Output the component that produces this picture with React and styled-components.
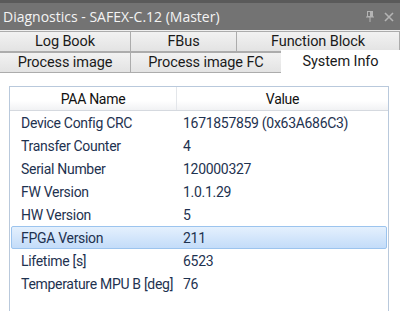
import React from "react";
import styled, { createGlobalStyle } from "styled-components";

const Global = createGlobalStyle`
  html, body { margin: 0; padding: 0; background: #ffffff; }
  body { font-family: "Open Sans", "Noto Sans", sans-serif; }
  #root { width: 400px; height: 311px; overflow: hidden; }
`;

const Window = styled.div`
  width: 400px;
  height: 311px;
  display: flex;
  flex-direction: column;
  background: #ffffff;
  border-top: 3px solid #5a5a5a;
  box-sizing: border-box;
  overflow: hidden;
`;

const TitleBar = styled.div`
  height: 27px;
  background: #737373;
  display: flex;
  align-items: center;
  padding: 0 6px 0 3px;
  color: #f4f4f4;
  font-size: 14px;
  flex-shrink: 0;
`;

const Title = styled.div`
  flex: 1;
  white-space: nowrap;
`;

const TitleIcons = styled.div`
  display: flex;
  gap: 10px;
  align-items: center;
  color: #b4b4b4;
`;

const TabStrip = styled.div`
  background: #f0f0f0;
  padding-top: 1px;
  display: flex;
  flex-direction: column;
  flex-shrink: 0;
`;

const TabRow = styled.div`
  display: grid;
  grid-template-columns: ${(p) => p.$cols};
  height: 21px;
  align-items: end;
`;

const Tab = styled.div`
  height: ${(p) => (p.$active ? "23px" : "21px")};
  margin-top: ${(p) => (p.$active ? "-2px" : "0")};
  box-sizing: border-box;
  display: flex;
  align-items: center;
  justify-content: center;
  font-family: "Roboto", "Open Sans", sans-serif;
  font-size: 14.5px;
  color: #1a1a1a;
  letter-spacing: -0.1px;
  background: ${(p) =>
    p.$active ? "#ffffff" : "linear-gradient(#f2f2f2, #e3e3e3)"};
  border: 1px solid ${(p) => (p.$active ? "#ffffff" : "#acacac")};
  border-left-width: ${(p) => (p.$first ? "0" : "1px")};
  margin-left: ${(p) => (p.$first ? "0" : "-1px")};
  border-bottom-color: ${(p) => (p.$active ? "#ffffff" : "#acacac")};
  position: relative;
  z-index: ${(p) => (p.$active ? 1 : 0)};
`;

const Content = styled.div`
  flex: 1;
  padding: 13px 11px 0 9px;
  display: flex;
  flex-direction: column;
  min-height: 0;
`;

const Grid = styled.div`
  flex: 1;
  border: 1px solid #b9c9dc;
  border-bottom: none;
  display: flex;
  flex-direction: column;
  font-family: "Roboto", "Open Sans", sans-serif;
  font-size: 14px;
  letter-spacing: -0.3px;
`;

const Header = styled.div`
  display: grid;
  grid-template-columns: 167px 1fr;
  height: 23px;
  background: linear-gradient(#ffffff 0%, #ffffff 60%, #f1f2f4 100%);
  border-bottom: 1px solid #d5d9df;
  color: #111;
`;

const HeaderCell = styled.div`
  display: flex;
  align-items: center;
  justify-content: center;
  border-right: ${(p) => (p.$last ? "none" : "1px solid #e3e6ea")};
`;

const Body = styled.div`
  display: flex;
  flex-direction: column;
  padding: 0 1px;
`;

const Row = styled.div`
  display: grid;
  grid-template-columns: 171px 1fr;
  height: 23px;
  align-items: center;
  box-sizing: border-box;
  color: #1e3250;
  border: 1px solid ${(p) => (p.$selected ? "#9cc4ee" : "transparent")};
  border-radius: 2px;
  background: ${(p) =>
    p.$selected ? "linear-gradient(#e4f0fd, #c3dcf9)" : "transparent"};
`;

const Cell = styled.div`
  padding-left: ${(p) => (p.$value ? "0" : "9px")};
  white-space: nowrap;
`;

const rows = [
  ["Device Config CRC", "1671857859 (0x63A686C3)"],
  ["Transfer Counter", "4"],
  ["Serial Number", "120000327"],
  ["FW Version", "1.0.1.29"],
  ["HW Version", "5"],
  ["FPGA Version", "211"],
  ["Lifetime [s]", "6523"],
  ["Temperature MPU B [deg]", "76"],
];

export default function App() {
  return (
    <>
      <Global />
      <Window>
        <TitleBar>
          <Title>Diagnostics - SAFEX-C.12 (Master)</Title>
          <TitleIcons>
            <svg width="8" height="11" viewBox="0 0 8 11">
              <rect x="1.5" y="0.5" width="5" height="5" fill="none" stroke="currentColor" />
              <rect x="4" y="1" width="2" height="4.5" fill="currentColor" />
              <line x1="0" y1="6" x2="8" y2="6" stroke="currentColor" />
              <line x1="4" y1="6" x2="4" y2="11" stroke="currentColor" />
            </svg>
            <svg width="10" height="10" viewBox="0 0 10 10">
              <path d="M1 1 L9 9 M9 1 L1 9" stroke="currentColor" strokeWidth="1.6" />
            </svg>
          </TitleIcons>
        </TitleBar>
        <TabStrip>
          <TabRow $cols="131px 106px 1fr">
            <Tab $first>Log Book</Tab>
            <Tab>FBus</Tab>
            <Tab>Function Block</Tab>
          </TabRow>
          <TabRow $cols="131px 151px 1fr">
            <Tab $first>Process image</Tab>
            <Tab>Process image FC</Tab>
            <Tab $active>System Info</Tab>
          </TabRow>
        </TabStrip>
        <Content>
          <Grid>
            <Header>
              <HeaderCell>PAA Name</HeaderCell>
              <HeaderCell $last>Value</HeaderCell>
            </Header>
            <Body>
              {rows.map(([n, v]) => (
                <Row key={n} $selected={n === "FPGA Version"}>
                  <Cell>{n}</Cell>
                  <Cell $value>{v}</Cell>
                </Row>
              ))}
            </Body>
          </Grid>
        </Content>
      </Window>
    </>
  );
}
